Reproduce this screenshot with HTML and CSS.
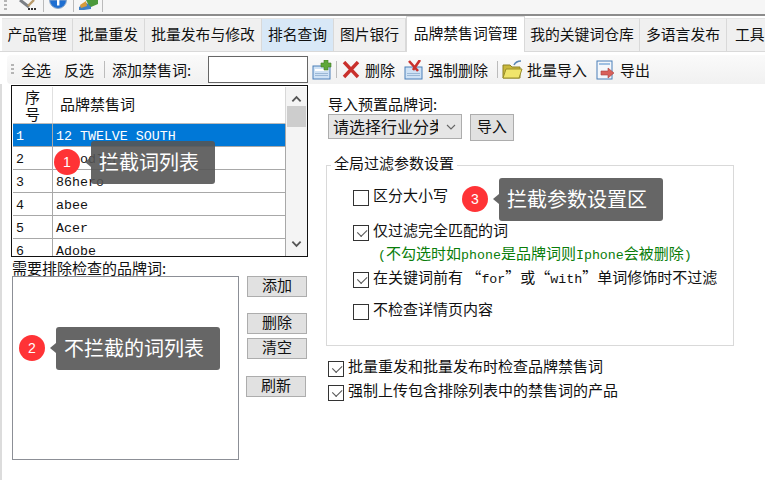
FILE: index.html
```html
<!DOCTYPE html>
<html lang="zh-CN">
<head>
<meta charset="utf-8">
<title>品牌禁售词管理</title>
<link rel="stylesheet" href="styles.css">
</head>
<body>
<div class="app">
  <header class="topbar">
    <span class="grip top-grip"></span>
    <svg class="top-icon i-tool" viewBox="0 0 22 14"><path d="M1 0 L10 7" stroke="#7b7f85" stroke-width="3" fill="none"/><path d="M15 0 L9 6" stroke="#b89a6a" stroke-width="2.4" fill="none"/><rect x="9" y="8" width="2" height="2" fill="#333"/><rect x="12" y="8" width="2" height="2" fill="#333"/><rect x="15" y="8" width="2" height="2" fill="#333"/></svg>
    <i class="top-sep"></i>
    <svg class="top-icon i-info" viewBox="0 0 18 14"><path d="M0.5 0 A8.5 8.5 0 0 0 17.5 0Z" fill="#1f6fd1" stroke="#8fa9c9"/><rect x="8" y="0" width="2.4" height="5.5" fill="#fff"/></svg>
    <i class="top-sep"></i>
    <svg class="top-icon i-map" viewBox="0 0 21 14"><path d="M1 7 L8 3 L13 5 L13 9 L6 10 L1 10Z" fill="#3f7fc4"/><path d="M8 0 L20 0 L20 4 L13 7 L10 4 Z" fill="#4c9a3c"/><path d="M2 5 L8 1 L9 6 L3 8Z" fill="#d89a3a"/></svg>
    <i class="top-sep"></i>
  </header>

  <nav class="tabs">
    <a class="tab w71">产品管理</a>
    <a class="tab w72">批量重发</a>
    <a class="tab w117">批量发布与修改</a>
    <a class="tab w72 hover">排名查询</a>
    <a class="tab w72">图片银行</a>
    <a class="tab w119 active">品牌禁售词管理</a>
    <a class="tab w115">我的关键词仓库</a>
    <a class="tab w87">多语言发布</a>
    <a class="tab w60">工具</a>
  </nav>

  <div class="toolbar">
    <span class="grip"></span>
    <span class="tool t-all">全选</span>
    <span class="tool t-inv">反选</span>
    <i class="sep s1"></i>
    <span class="tool t-add">添加禁售词:</span>
    <input class="add-input" type="text">
    <svg class="ticon ti-add" viewBox="0 0 20 20"><rect x="1" y="6" width="17" height="13" fill="#cfe2f5" stroke="#4a7fb8"/><rect x="3" y="9" width="13" height="2" fill="#fff"/><rect x="3" y="13" width="13" height="1" fill="#9bb8d6"/><rect x="3" y="15" width="13" height="1" fill="#9bb8d6"/><path d="M12 0h4v3h3v4h-3v3h-4V7H9V3h3z" fill="#5fa83a" stroke="#3f7a26" stroke-width=".6"/></svg>
    <i class="sep s2"></i>
    <svg class="ticon ti-del" viewBox="0 0 18 18"><path d="M2 1 L16 16 M16 1 L2 16" stroke="#c9302c" stroke-width="3.4" fill="none"/></svg>
    <span class="tool t-del">删除</span>
    <svg class="ticon ti-force" viewBox="0 0 19 20"><rect x="1" y="7" width="17" height="12" fill="#cfe2f5" stroke="#4a7fb8"/><rect x="3" y="13" width="13" height="1" fill="#9bb8d6"/><rect x="3" y="15" width="13" height="1" fill="#9bb8d6"/><path d="M5 1 L14 11 M16 0 L9 10" stroke="#c9302c" stroke-width="2.6" fill="none"/></svg>
    <span class="tool t-force">强制删除</span>
    <i class="sep s3"></i>
    <svg class="ticon ti-folder" viewBox="0 0 21 20"><path d="M1 5h7l2 2h8v11H1z" fill="#c9b83c" stroke="#8d8224"/><path d="M1 18 L4 9h16l-3 9z" fill="#f0e56b" stroke="#9a8f2a"/><path d="M12 5 Q14 1 19 1" stroke="#5b87b5" stroke-width="1.6" fill="none"/></svg>
    <span class="tool t-import">批量导入</span>
    <svg class="ticon ti-export" viewBox="0 0 19 20"><rect x="1" y="1" width="15" height="18" fill="#f4f7fb" stroke="#4a7fb8"/><rect x="3" y="3" width="11" height="2" fill="#9fc0e2"/><path d="M5 11h7V8l6 5-6 5v-3H5z" fill="#d9605a" stroke="#a8403c" stroke-width=".6"/></svg>
    <span class="tool t-export">导出</span>
  </div>

  <main class="content">
    <section class="left">
      <div class="grid-box">
        <div class="grid">
          <div class="row head"><div class="c1">序<br>号</div><div class="c2 head-name">品牌禁售词</div></div>
          <div class="row sel"><div class="c1">1</div><div class="c2">12 TWELVE SOUTH</div></div>
          <div class="row"><div class="c1">2</div><div class="c2">3doodler</div></div>
          <div class="row"><div class="c1">3</div><div class="c2">86hero</div></div>
          <div class="row"><div class="c1">4</div><div class="c2">abee</div></div>
          <div class="row"><div class="c1">5</div><div class="c2">Acer</div></div>
          <div class="row"><div class="c1">6</div><div class="c2">Adobe</div></div>
        </div>
        <div class="scroll">
          <svg class="chev" viewBox="0 0 12 8"><path d="M1.5 6.5 L6 2 L10.5 6.5" stroke="#555" stroke-width="2" fill="none"/></svg>
          <div class="thumb"></div>
          <svg class="chev down" viewBox="0 0 12 8"><path d="M1.5 1.5 L6 6 L10.5 1.5" stroke="#555" stroke-width="2" fill="none"/></svg>
        </div>
      </div>
      <div class="label exclude-label">需要排除检查的品牌词:</div>
      <div class="exclude">
        <div class="listbox"></div>
        <div class="btns">
          <button class="btn b-add">添加</button>
          <button class="btn b-del">删除</button>
          <button class="btn b-clear">清空</button>
          <button class="btn b-refresh">刷新</button>
        </div>
      </div>
    </section>

    <section class="right">
      <div class="label">导入预置品牌词:</div>
      <div class="import-row">
        <div class="select"><span class="select-text">请选择行业分类</span>
          <svg class="select-arrow" viewBox="0 0 10 6"><path d="M1 1 L5 5 L9 1" stroke="#666" stroke-width="1.1" fill="none"/></svg>
        </div>
        <button class="btn b-import">导入</button>
      </div>
      <fieldset class="settings">
        <legend>全局过滤参数设置</legend>
        <div class="check r1"><span class="box"></span><span>区分大小写</span></div>
        <div class="check r2"><span class="box on"></span><span>仅过滤完全匹配的词</span></div>
        <div class="hint"><span class="lat">(</span>不勾选时如<span class="lat">phone</span>是品牌词则<span class="lat">Iphone</span>会被删除<span class="lat">)</span></div>
        <div class="check r3"><span class="box on"></span><span>在关键词前有 “<span class="lat">for</span>”或“<span class="lat">with</span>”单词修饰时不过滤</span></div>
        <div class="check r4"><span class="box"></span><span>不检查详情页内容</span></div>
      </fieldset>
      <div class="check o1"><span class="box on"></span><span>批量重发和批量发布时检查品牌禁售词</span></div>
      <div class="check o2"><span class="box on"></span><span>强制上传包含排除列表中的禁售词的产品</span></div>
    </section>
  </main>

  <div class="callout c-one"><span class="badge">1</span><span class="tip">拦截词列表</span></div>
  <div class="callout c-two"><span class="badge">2</span><span class="tip">不拦截的词列表</span></div>
  <div class="callout c-three"><span class="badge">3</span><span class="tip">拦截参数设置区</span></div>
</div>
</body>
</html>
```
FILE: styles.css
```css
* { box-sizing: border-box; }
html, body { margin: 0; padding: 0; background: #fff; }
body { font-family: "Noto Sans CJK SC", "Liberation Sans", sans-serif; font-size: 15px; color: #111; }
.app { position: relative; width: 765px; height: 480px; overflow: hidden; background: #fff; }

/* top strip */
.topbar { height: 16px; background: #f6f6f6; border-bottom: 2px solid #8c8c8c; display: flex; align-items: flex-start; }
.grip { width: 3px; height: 12px; background: repeating-linear-gradient(#b5b5b5 0 2px, transparent 2px 4px); flex: none; }
.top-grip { margin: 0 0 0 4px; }
.top-icon { height: 14px; flex: none; }
.i-tool { width: 22px; margin: 0 2px 0 12px; }
.i-info { width: 18px; margin: 0 6px 0 5px; }
.i-map { width: 21px; margin: 0 3px 0 4px; }
.top-sep { width: 1px; height: 12px; background: #bbb; flex: none; }

/* tabs */
.tabs { display: flex; align-items: flex-end; height: 36px; padding-left: 2px; border-bottom: 1px solid #d9d9d9; background: #fff; }
.tab { height: 33px; line-height: 29px; text-align: center; background: #f0f0f0; border-right: 1px solid #d9d9d9; border-top: 1px solid #e4e4e4; font-size: 14.8px; flex: none; white-space: nowrap; }
.tab.hover { background: #d8e8f7; }
.tab.active { height: 36px; margin-bottom: -1px; background: #fff; line-height: 31px; border: 1px solid #d9d9d9; border-bottom: 0; }
.w71 { width: 71px; } .w72 { width: 72px; } .w117 { width: 117px; } .w119 { width: 119px; }
.w115 { width: 115px; } .w87 { width: 87px; } .w60 { width: 60px; text-align: left; padding-left: 8px; }

/* toolbar */
.toolbar { display: flex; align-items: center; height: 29px; margin: 3px 0 0 7px; padding-left: 4px; border-radius: 4px 0 0 4px; background: linear-gradient(#fafafa, #f1f1f1); font-size: 15px; }
.tool { flex: none; white-space: nowrap; }
.t-all { margin-left: 7px; }
.t-inv { margin-left: 13px; }
.sep { width: 1px; height: 17px; background: #bcbcbc; flex: none; }
.s1 { margin-left: 10px; }
.t-add { margin-left: 7px; width: 96px; }
.add-input { width: 100px; height: 27px; border: 1px solid #666; background: #fff; padding: 0; flex: none; }
.ticon { flex: none; }
.ti-add { width: 20px; height: 20px; margin-left: 4px; }
.s2 { margin-left: 4px; }
.ti-del { width: 18px; height: 18px; margin-left: 5px; }
.t-del { margin-left: 5px; }
.ti-force { width: 19px; height: 20px; margin-left: 9px; }
.t-force { margin-left: 5px; }
.s3 { margin-left: 9px; }
.ti-folder { width: 21px; height: 20px; margin-left: 4px; }
.t-import { margin-left: 4px; }
.ti-export { width: 19px; height: 20px; margin-left: 9px; }
.t-export { margin-left: 5px; }

/* content */
.content { display: flex; align-items: flex-start; height: 396px; border-left: 2px solid #dcdcdc; }
.left { width: 324px; flex: none; padding: 1px 0 0 9px; }
.grid-box { display: flex; width: 297px; height: 172px; border: 1px solid #111; padding: 1px 0 0 1px; overflow: hidden; }
.grid { width: 273px; flex: none; font-family: "Liberation Mono", "Noto Sans CJK SC", monospace; font-size: 13.3px; }
.row { display: flex; height: 23px; border-bottom: 1px solid #a8a8a8; border-right: 1px solid #a8a8a8; line-height: 25px; }
.row .c1 { width: 40px; flex: none; border-right: 1px solid #a8a8a8; padding-left: 3px; }
.row .c2 { padding-left: 3px; white-space: nowrap; }
.row.head { height: 37px; border-color: #d8d8d8; border-bottom-color: #bbb; }
.row.head .c1 { border-right: 1px solid #e0e0e0; font-family: "Noto Sans CJK SC", sans-serif; font-size: 15px; line-height: 17px; padding: 1px 0 0 0; text-align: center; }
.row.head .head-name { font-family: "Noto Sans CJK SC", sans-serif; font-size: 15px; line-height: 33px; padding-left: 7px; }
.row.sel { background: #0078d7; color: #fff; }
.scroll { width: 21px; flex: none; background: #f4f4f4; display: flex; flex-direction: column; align-items: center; position: relative; height: 169px; }
.chev { width: 11px; height: 8px; margin-top: 8px; flex: none; }
.thumb { width: 19px; height: 21px; background: #cdcdcd; margin-top: 3px; flex: none; }
.chev.down { margin-top: auto; margin-bottom: 8px; }
.label { font-size: 15px; line-height: 18px; white-space: nowrap; }
.exclude-label { margin: 2px 0 0 1px; height: 17px; }
.exclude { display: flex; align-items: flex-start; margin-left: 1px; }
.listbox { width: 227px; height: 184px; border: 1px solid #8c8f96; background: #fff; flex: none; }
.btns { display: flex; flex-direction: column; align-items: flex-start; margin: 0 0 0 8px; }
.btn { display: block; height: 21px; width: 60px; padding: 0 0 3px; background: #e1e1e1; border: 1px solid #adadad; font: inherit; font-size: 15px; line-height: 16px; color: #111; }
.b-del { margin-top: 16px; }
.b-clear { margin-top: 4px; }
.b-refresh { margin: 17px 0 0 -1px; }

.right { flex: 1; padding: 11px 0 0 0; min-width: 0; }
.right > .label { margin-left: 2px; height: 19px; }
.import-row { display: flex; align-items: flex-start; margin-left: 2px; }
.select { position: relative; width: 134px; height: 25px; background: #e6e6e6; border: 1px solid #adadad; display: flex; align-items: center; padding-left: 4px; }
.select-text { display: block; width: 105px; overflow: hidden; white-space: nowrap; font-size: 16px; line-height: 23px; }
.select-arrow { width: 10px; height: 6px; margin-left: 8px; flex: none; }
.b-import { width: 44px; height: 27px; margin-left: 8px; }
.settings { width: 408px; height: 189px; margin: 16px 0 0 0; padding: 0; border: 1px solid #d9d9d9; position: relative; }
.settings legend { padding: 0 3px; margin-left: 4px; font-size: 15px; line-height: 16px; position: relative; top: -2px; }
.check { display: flex; align-items: flex-start; font-size: 15px; line-height: 18px; white-space: nowrap; }
.box { width: 16px; height: 16px; border: 1px solid #333; background: #fff; flex: none; position: relative; margin-top: 4px; margin-right: 4px; }
.box.on::after { content: ""; position: absolute; left: 3px; top: 2px; width: 8px; height: 5px; border-left: 1.6px solid #555; border-bottom: 1.6px solid #555; transform: rotate(-45deg) translate(0,1px); }
.r1 { margin: 13px 0 0 26px; }
.r2 { margin: 15px 0 0 26px; }
.hint { margin: 3px 0 0 51px; height: 18px; color: #0a7d0a; font-size: 15px; line-height: 18px; white-space: nowrap; }
.r3 { margin: 6px 0 0 26px; }
.r4 { margin: 11px 0 0 26px; }
.lat { font-family: "Liberation Mono", monospace; font-size: 13.3px; }
.o1 { margin: 11px 0 0 2px; }
.o2 { margin: 4px 0 0 2px; }

/* callouts */
.callout { position: absolute; display: flex; align-items: center; height: 43px; }
.badge { width: 26px; height: 26px; border-radius: 50%; background: #ff3336; color: #fff; font-family: "Liberation Sans", sans-serif; font-size: 14px; line-height: 26px; text-align: center; flex: none; margin-right: 11px; position: relative; top: -1px; }
.tip { position: relative; height: 43px; padding: 0 16px 0 8px; border-radius: 3px; background: rgba(85,85,85,.9); color: #fff; font-size: 20px; line-height: 41px; white-space: nowrap; }
.tip::before { content: ""; position: absolute; left: -6px; top: 16px; border: 5px solid transparent; border-left: 0; border-right: 6px solid rgba(85,85,85,.9); }
.c-one { left: 54px; top: 141px; }
.c-one .tip { width: 124px; }
.c-two { left: 19px; top: 327px; }
.c-two .tip { width: 164px; }
.c-three { left: 462px; top: 178px; }
.c-three .tip { width: 164px; }
```
